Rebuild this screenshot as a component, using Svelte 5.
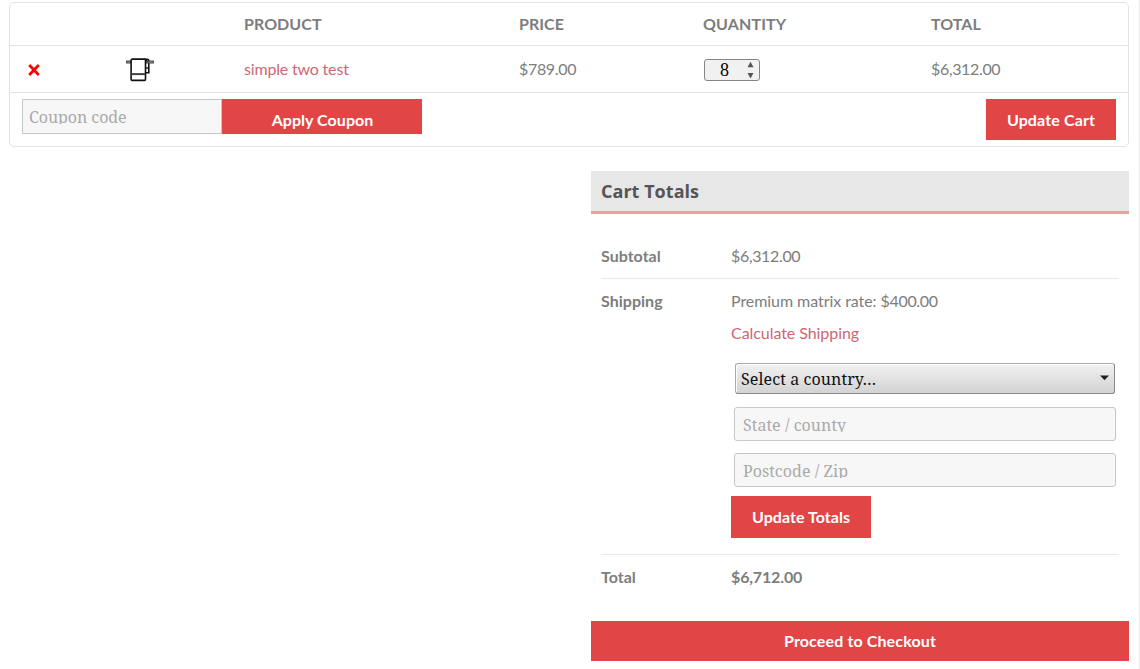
<script>
  const headings = ['PRODUCT', 'PRICE', 'QUANTITY', 'TOTAL'];
</script>

<main>
  <section class="cart">
    <div class="row head">
      <span></span><span></span>
      {#each headings as h}<span>{h}</span>{/each}
    </div>
    <div class="row item">
      <svg class="remove" width="12" height="12" viewBox="0 0 12 12"><path d="M1.2 1 10.8 11M10.8 1 1.2 11" stroke="#f00" stroke-width="2.7" /></svg>
      <svg class="thumb" width="28" height="24" viewBox="0 0 28 24" fill="#fff" stroke="#111" stroke-width="1.6">
        <path d="M18 1.2H21.5Q22.8 1.2 22.8 2.5V14.7H19" />
        <path d="M19 10H23" stroke-width="1.4" />
        <rect x=".6" y="3" width="4.5" height="2" fill="#999" stroke="#444" stroke-width="1" />
        <rect x="20" y="3" width="7.4" height="2" fill="#999" stroke="#444" stroke-width="1" />
        <path d="M6.6 1.1H18.4Q19.5 1.1 19.5 2.3V21.3Q19.5 22.4 18.4 22.4H6.2Q5.1 22.4 5.1 21.3V3Q5.1 1.1 6.6 1.1Z" />
        <path d="M5.6 16.1H19" stroke="#444" stroke-width="2" />
        <path d="M19.5 1.8 22.5 4" stroke-width="1" />
      </svg>
      <a class="product" href="#product">simple two test</a>
      <span class="price">$789.00</span>
      <div class="qty"><span>8</span>
        <svg width="7" height="18" viewBox="0 0 7 18"><path d="M3.5.8 6.5 6.3H.5ZM3.5 17.4 6.5 11.9H.5Z" fill="#555" /></svg>
      </div>
      <span class="price">$6,312.00</span>
    </div>
    <div class="actions">
      <div class="field coupon"><span>Coupon code</span></div>
      <button class="apply">Apply Coupon</button>
      <button class="update">Update Cart</button>
    </div>
  </section>

  <section class="totals">
    <h2>Cart Totals</h2>
    <dl>
      <div class="line first"><dt>Subtotal</dt><dd class="price">$6,312.00</dd></div>
      <div class="line shipping">
        <dt>Shipping</dt>
        <dd>
          <div class="rate">Premium matrix rate: <span>$400.00</span></div>
          <div><a class="calc" href="#shipping">Calculate Shipping</a></div>
          <div class="select"><span>Select a country…</span>
            <svg width="9" height="6" viewBox="0 0 9 6"><path d="M0 .5H9L4.5 5.3Z" fill="#222" /></svg>
          </div>
          <div class="field"><span>State / county</span></div>
          <div class="field"><span>Postcode / Zip</span></div>
          <button class="recalc">Update Totals</button>
        </dd>
      </div>
      <div class="line last"><dt>Total</dt><dd class="sum">$6,712.00</dd></div>
    </dl>
    <button class="checkout">Proceed to Checkout</button>
  </section>
</main>

<style>
  :global(body) { background: #fff; }
  main {
    box-sizing: border-box; width: 1140px; height: 669px; padding: 2px 10px 0 9px;
    border-right: 1px solid #e8e8e8; overflow: hidden;
    font: 16px/32px Lato, sans-serif; color: #7d7d7d;
  }
  .cart { box-sizing: border-box; height: 145px; border: 1px solid #e3e3e3; border-radius: 5px; }
  .row {
    display: grid; grid-template-columns: 116px 118px 275px 184px 228px 1fr;
    align-items: center; border-bottom: 1px solid #e3e3e3;
  }
  .head { height: 42px; font-weight: 700; letter-spacing: .05px; }
  .head span:nth-child(5) { letter-spacing: .12px; }
  .item { height: 46px; }
  .remove { margin: 2px 0 0 18px; }
  .thumb { margin-top: 2px; }
  a { color: #cf6674; text-decoration: none; }
  .product { letter-spacing: -.18px; }
  .price { letter-spacing: -.34px; }
  .rate { letter-spacing: -.06px; }
  .rate span { letter-spacing: -.34px; }
  .calc { letter-spacing: -.06px; }
  .sum { font-weight: 700; letter-spacing: -.15px; }
  .qty {
    box-sizing: border-box; width: 56px; height: 22px; margin: 2px 0 0 1px;
    border: 1px solid #858585; border-radius: 3px;
    background: #f1f1f1; display: flex; align-items: center; justify-content: space-between;
    padding: 0 5px 0 15px; color: #000; font: 18px/20px "Liberation Serif", serif;
  }
  .actions { display: flex; padding: 6px 12px; align-items: flex-start; }
  .field {
    box-sizing: border-box; height: 34px; border: 1px solid #c8c8c8; border-radius: 3px; background: #f7f7f7;
    padding: 8px 8px 0; color: #aaa; font: 16px/19px "Noto Serif", "Droid Serif", "DejaVu Serif Condensed", serif;
  }
  .field span { display: block; height: 16px; overflow: hidden; }
  .coupon { width: 200px; height: 35px; padding-left: 6px; border-radius: 0; letter-spacing: -.06px; }
  button {
    box-sizing: border-box; border: 0; padding: 0; background: #e14546; color: #fff;
    font: 700 16px/40px Lato, sans-serif; text-align: center; letter-spacing: .05px;
  }
  .apply { width: 200px; height: 35px; line-height: 28px; padding: 7px 0 0 1px; }
  .update { width: 130px; height: 41px; margin-left: auto; letter-spacing: .13px; }
  .totals { width: 538px; margin: 24px 0 0 auto; }
  h2 {
    margin: 0; height: 40px; padding-left: 10px; background: #e7e7e7; border-bottom: 3px solid #ef9d9e;
    color: #555; font: 700 18px/40px "Open Sans", sans-serif; letter-spacing: .03px;
  }
  dl { margin: 20px 10px 0; }
  dd { margin: 0; }
  .line { display: grid; grid-template-columns: 130px 1fr; padding: 6px 0; }
  .line + .line { border-top: 1px solid #e8e8e8; }
  dt { font-weight: 700; letter-spacing: .02px; }
  .first { height: 32px; }
  .shipping { height: 263px; }
  .select {
    box-sizing: border-box; width: 380px; height: 31px; margin: 14px 0 13px 4px; padding: 1px 5px 0 5px;
    border: 1px solid #aaa; border-bottom-color: #888; border-right-color: #888; border-radius: 3px;
    box-shadow: inset 1px 1px #fff; background: linear-gradient(#f1f1f1, #d3d3d3);
    display: flex; align-items: center; justify-content: space-between; color: #111;
    font: 16px/28px "Noto Serif", "Droid Serif", "DejaVu Serif Condensed", serif; letter-spacing: .1px;
  }
  .select svg { margin-bottom: 2px; }
  .shipping .field { width: 382px; margin: 0 0 12px 3px; letter-spacing: .03px; }
  .recalc { display: block; width: 140px; height: 42px; margin-top: -3px; }
  .last { height: 32px; }
  .checkout { display: block; width: 538px; height: 40px; margin-top: 22px; letter-spacing: .13px; }
</style>
